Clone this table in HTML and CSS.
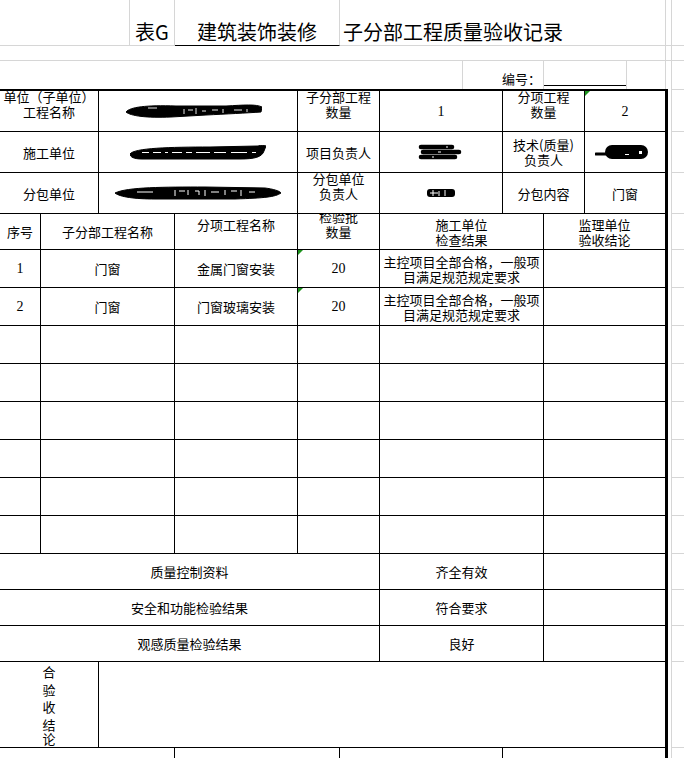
FILE: index.html
```html
<!DOCTYPE html>
<html lang="zh-CN">
<head>
<meta charset="utf-8">
<title>子分部工程质量验收记录</title>
<link rel="stylesheet" href="styles.css">
</head>
<body>
<div class="sheet">
  <div class="hrow ha">
    <div class="h-blank"></div>
    <div class="h-code">表G</div>
    <div class="h-major">建筑装饰装修</div>
    <div class="h-name">子分部工程质量验收记录</div>
    <div class="h-gap"></div>
    <div class="h-rest"></div>
  </div>
  <div class="hrow hb">
    <div class="h-wide"></div>
    <div class="h-gap"></div>
    <div class="h-rest"></div>
  </div>
  <div class="hrow hc">
    <div class="h-lead"></div>
    <div class="h-label">编号：</div>
    <div class="h-line"><div class="h-underline"></div></div>
    <div class="h-tail"></div>
    <div class="h-gap"></div>
    <div class="h-rest"></div>
  </div>

  <div class="main">
    <div class="tbl">
      <!-- row 1 -->
      <div class="c sp2 up">单位（子单位）<br>工程名称</div>
      <div class="c sp2">
        <svg class="scrib-a" width="136" height="16" viewBox="0 0 136 16"><path d="M0 9 C4 4 20 2 50 3 L100 3 C118 2 130 1 136 4 L135 9 C120 10 100 11 80 12 L45 14 C20 15 5 13 0 9 Z" fill="#000" stroke="#000" stroke-width="1"/><path d="M22 5h9M58 6v5M62 7h5M70 5v6M76 8h4M86 7h6M97 6v4M108 7h8M121 6v3" stroke="#fff" stroke-width="0.9" fill="none"/></svg>
      </div>
      <div class="c up">子分部工程<br>数量</div>
      <div class="c num">1</div>
      <div class="c sp2 up">分项工程<br>数量</div>
      <div class="c e num mk">2</div>

      <!-- row 2 -->
      <div class="c sp2">施工单位</div>
      <div class="c sp2">
        <svg width="136" height="15" viewBox="0 0 136 15"><path d="M0 9 C4 3 40 2 80 2 L128 1 C131 0 134 0 136 1 L134 6 C132 12 125 14 110 14 L12 14 C4 14 0 12 0 9 Z" fill="#000" stroke="#000" stroke-width="1"/><path d="M12 7.5h7M23 7.5h8M35 7.5h3M42 7.5h10M56 7.5h6M66 7.5h14M84 7.5h12M101 7.5h16M122 7.5h4" stroke="#fff" stroke-width="1.2"/></svg>
      </div>
      <div class="c">项目负责人</div>
      <div class="c">
        <svg class="scrib-d" width="44" height="16" viewBox="0 0 44 16"><path d="M3 3 H34 M5 8 H41 M3 13 H37" stroke="#000" stroke-width="4.6" stroke-linecap="round" fill="none"/><path d="M20 8h3M28 3h2M14 13h2" stroke="#fff" stroke-width="1"/></svg>
      </div>
      <div class="c sp2">技术(质量)<br>负责人</div>
      <div class="c e">
        <svg class="scrib-f" width="54" height="16" viewBox="0 0 54 16"><path d="M1 10 H14" stroke="#000" stroke-width="3" stroke-linecap="round"/><rect x="10" y="1" width="43" height="14" rx="7" fill="#000"/><path d="M44 7h3v3h-3zM30 10h4v1h-4z" fill="#fff"/></svg>
      </div>

      <!-- row 3 -->
      <div class="c sp2">分包单位</div>
      <div class="c sp2">
        <svg width="166" height="14" viewBox="0 0 166 14"><path d="M0 7 C12 1 50 1 90 1 L150 2 C158 3 165 5 166 7 C160 11 150 12 120 13 L40 13 C20 13 5 11 0 7 Z" fill="#000" stroke="#000" stroke-width="1"/><path d="M22 6h16M60 4v6M64 5h6M73 4v5M80 5h4v4M90 4v6M96 6h8M110 4v5M116 5h6M126 4v6M134 6h6" stroke="#fff" stroke-width="1" fill="none"/></svg>
      </div>
      <div class="c up">分包单位<br>负责人</div>
      <div class="c">
        <svg width="28" height="10" viewBox="0 0 28 10"><rect x="0" y="1" width="28" height="8" rx="3" fill="#000"/><path d="M6 2v6M12 3v5M18 2v6M3 5h8" stroke="#fff" stroke-width="1"/></svg>
      </div>
      <div class="c sp2">分包内容</div>
      <div class="c e">门窗</div>

      <!-- row 4 -->
      <div class="c">序号</div>
      <div class="c sp2">子分部工程名称</div>
      <div class="c up">分项工程名称</div>
      <div class="c up">检验批<br>数量</div>
      <div class="c sp2">施工单位<br>检查结果</div>
      <div class="c sp2 e">监理单位<br>验收结论</div>

      <!-- row 5 -->
      <div class="c num">1</div>
      <div class="c sp2">门窗</div>
      <div class="c">金属门窗安装</div>
      <div class="c num mk">20</div>
      <div class="c sp2">主控项目全部合格，一般项<br>目满足规范规定要求</div>
      <div class="c sp2 e"></div>

      <!-- row 6 -->
      <div class="c num">2</div>
      <div class="c sp2">门窗</div>
      <div class="c">门窗玻璃安装</div>
      <div class="c num mk">20</div>
      <div class="c sp2">主控项目全部合格，一般项<br>目满足规范规定要求</div>
      <div class="c sp2 e"></div>

      <!-- rows 7-12 empty -->
      <div class="c"></div><div class="c sp2"></div><div class="c"></div><div class="c"></div><div class="c sp2"></div><div class="c sp2 e"></div>
      <div class="c"></div><div class="c sp2"></div><div class="c"></div><div class="c"></div><div class="c sp2"></div><div class="c sp2 e"></div>
      <div class="c"></div><div class="c sp2"></div><div class="c"></div><div class="c"></div><div class="c sp2"></div><div class="c sp2 e"></div>
      <div class="c"></div><div class="c sp2"></div><div class="c"></div><div class="c"></div><div class="c sp2"></div><div class="c sp2 e"></div>
      <div class="c"></div><div class="c sp2"></div><div class="c"></div><div class="c"></div><div class="c sp2"></div><div class="c sp2 e"></div>
      <div class="c"></div><div class="c sp2"></div><div class="c"></div><div class="c"></div><div class="c sp2"></div><div class="c sp2 e"></div>

      <!-- summary rows -->
      <div class="c sp5">质量控制资料</div>
      <div class="c sp2">齐全有效</div>
      <div class="c sp2 e"></div>

      <div class="c sp5">安全和功能检验结果</div>
      <div class="c sp2">符合要求</div>
      <div class="c sp2 e"></div>

      <div class="c sp5">观感质量检验结果</div>
      <div class="c sp2">良好</div>
      <div class="c sp2 e"></div>

      <!-- conclusion -->
      <div class="c sp2 vert"><span>合</span><span>验</span><span>收</span><span>结</span><span class="vl">论</span></div>
      <div class="c sp7 e"></div>

      <!-- partial signature row -->
      <div class="tail">
        <div class="t1"></div>
        <div class="t2"></div>
        <div class="t3"></div>
        <div class="t4"></div>
      </div>
    </div>

    <div class="side">
      <div class="sr r41"></div>
      <div class="sr r41"></div>
      <div class="sr r41"></div>
      <div class="sr r36"></div>
      <div class="sr r38"></div>
      <div class="sr r38"></div>
      <div class="sr r38"></div>
      <div class="sr r38"></div>
      <div class="sr r38"></div>
      <div class="sr r38"></div>
      <div class="sr r38"></div>
      <div class="sr r38"></div>
      <div class="sr r36"></div>
      <div class="sr r36"></div>
      <div class="sr r36"></div>
      <div class="sr r86"></div>
      <div class="sr r10"></div>
    </div>
  </div>
</div>
</body>
</html>
```
FILE: styles.css
```css
html, body {
  margin: 0;
  padding: 0;
  background: #fff;
  overflow: hidden;
}

body {
  font-family: "Noto Sans CJK SC", sans-serif;
  font-size: 13px;
  color: #000;
}

.sheet {
  width: 684px;
  height: 758px;
  overflow: hidden;
}

/* ---------- header rows (sheet gridlines) ---------- */
.hrow {
  display: flex;
}

.hrow > div {
  box-sizing: border-box;
  flex: none;
  border-right: 1px solid #d6d6d6;
}

.hrow > .h-rest {
  flex: 1;
  border-right: none;
}

.ha {
  height: 46px;
}

.ha > div {
  border-bottom: 1px solid #d6d6d6;
  display: flex;
  align-items: flex-end;
  justify-content: center;
  padding-bottom: 3px;
  font-size: 20px;
  line-height: 20px;
  white-space: nowrap;
}

.h-blank { width: 130px; }
.h-code { width: 45px; }

.ha > .h-major {
  width: 165px;
  border-bottom-color: #000;
}

.ha > .h-name {
  width: 326px;
  justify-content: flex-start;
  padding-left: 3px;
}

.h-gap { width: 6px; }

.hb {
  height: 15px;
}

.hb > div {
  border-bottom: 1px solid #d6d6d6;
}

.h-wide { width: 666px; }

.hc {
  height: 28px;
}

.h-lead { width: 463px; }

.hc > .h-label {
  width: 81px;
  display: flex;
  align-items: flex-end;
  justify-content: flex-end;
  padding: 0 2px 3px 0;
  line-height: 15px;
  white-space: nowrap;
}

.hc > .h-line {
  width: 83px;
  display: flex;
  padding-bottom: 3px;
}

.h-underline {
  flex: 1;
  border-bottom: 1px solid #000;
}

.h-tail { width: 39px; }

/* ---------- main table ---------- */
.main {
  display: flex;
}

.tbl {
  box-sizing: border-box;
  width: 668px;
  display: grid;
  grid-template-columns: 41px 58px 76px 123px 82px 123px 41px 41px 80px;
  grid-template-rows: 41px 41px 41px 36px repeat(8, 38px) 36px 36px 36px 86px 10px;
  border-top: 2px solid #000;
  border-right: 3px solid #000;
}

.c {
  box-sizing: border-box;
  position: relative;
  border-right: 1px solid #000;
  border-bottom: 1px solid #000;
  display: flex;
  flex-direction: column;
  align-items: center;
  justify-content: center;
  text-align: center;
  line-height: 15px;
  white-space: nowrap;
  overflow: hidden;
}

.c svg {
  display: block;
  flex: none;
}

.sp2 { grid-column: span 2; }
.sp5 { grid-column: span 5; }
.sp7 { grid-column: span 7; }

.e { border-right: none; }

.up { padding-bottom: 15px; }

.num {
  font-family: "Liberation Serif", serif;
  font-size: 14px;
}

.mk::before {
  content: "";
  position: absolute;
  top: 0;
  left: 0;
  border-top: 5px solid #1c931c;
  border-right: 5px solid transparent;
}

.scrib-a { margin-right: 8px; }
.scrib-d { margin-right: 3px; }
.scrib-f { margin-right: 7px; }

.vert {
  justify-content: flex-end;
  padding-bottom: 2px;
}

.vert span {
  display: block;
  height: 17.5px;
  line-height: 17.5px;
}

.vert .vl {
  height: 12px;
  line-height: 12px;
}

.tail {
  grid-column: 1 / -1;
  display: flex;
}

.tail > div {
  box-sizing: border-box;
  border-right: 1px solid #000;
  flex: none;
}

.tail .t1 { width: 175px; }
.tail .t2 { width: 165px; }
.tail .t3 { width: 163px; }
.tail .t4 { flex: 1; border-right: none; }

/* ---------- gridlines right of the table ---------- */
.side {
  box-sizing: border-box;
  width: 13px;
  margin-left: 3px;
  border-left: 1px solid #d6d6d6;
  border-top: 1px solid #d6d6d6;
  padding-top: 1px;
  display: flex;
  flex-direction: column;
}

.sr {
  box-sizing: border-box;
  flex: none;
  border-bottom: 1px solid #d6d6d6;
}

.r41 { height: 41px; }
.r36 { height: 36px; }
.r38 { height: 38px; }
.r86 { height: 86px; }
.r10 { height: 10px; border-bottom: none; }
```
